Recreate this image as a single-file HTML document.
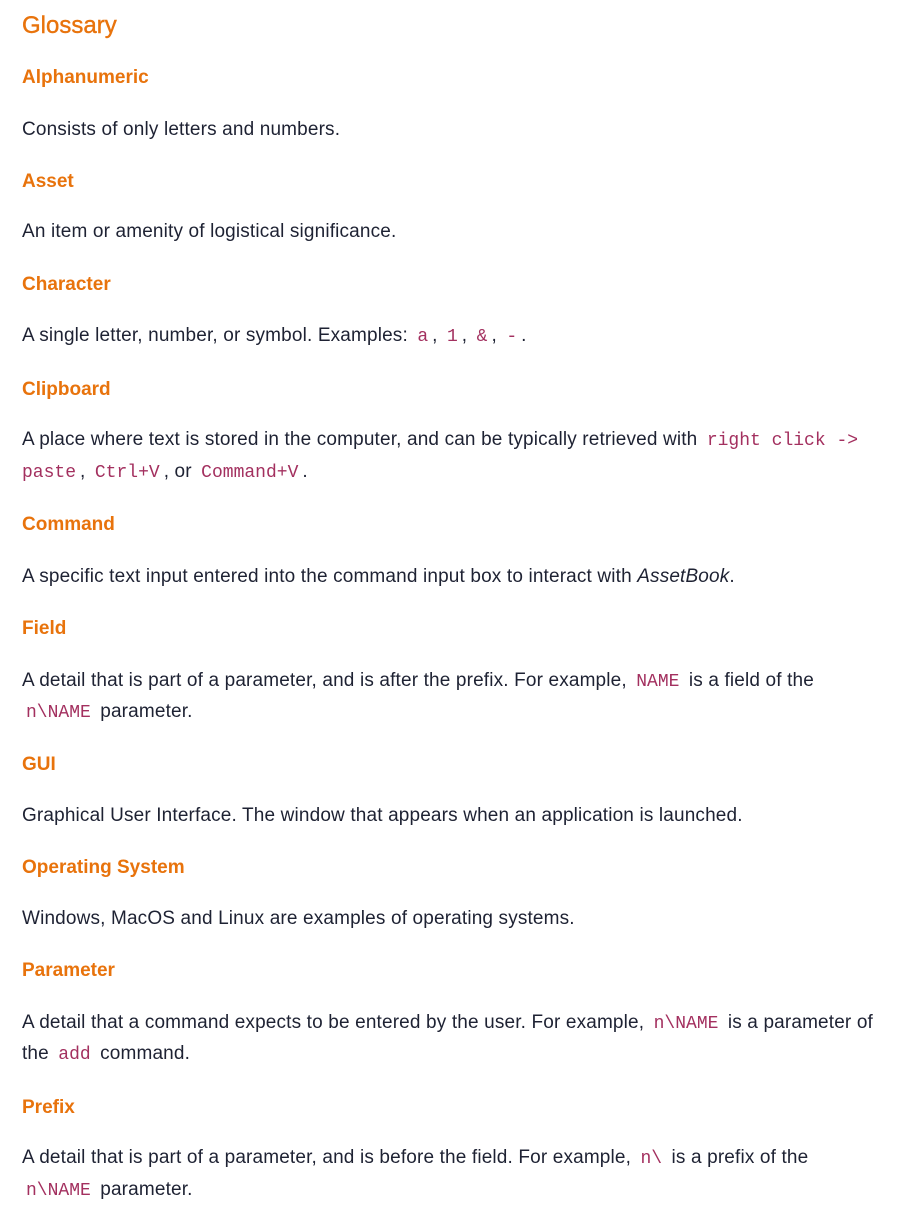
<!DOCTYPE html>
<html><head><meta charset="utf-8"><style>
body{margin:0;width:912px;height:1198px;background:#fff;font-family:"Liberation Sans",sans-serif;position:relative;overflow:hidden}
div{position:absolute;left:22px;white-space:nowrap;line-height:30px;margin-top:2px}
.h1{font-size:24px;color:#e8730c;line-height:34px;-webkit-text-stroke:0.4px #e8730c;margin-top:0}
.h{font-size:19px;font-weight:bold;color:#e8730c}
.p{font-size:19px;color:#1e2233;letter-spacing:0.15px}
code{font-family:"Liberation Mono",monospace;font-size:18px;letter-spacing:0;color:#a3305f;padding:0 4px}
</style></head><body>
<div class="h1" style="top:9px">Glossary</div>
<div class="h" style="top:61px">Alphanumeric</div>
<div class="p" style="top:113px">Consists of only letters and numbers.</div>
<div class="h" style="top:165px">Asset</div>
<div class="p" style="top:215px">An item or amenity of logistical significance.</div>
<div class="h" style="top:268px">Character</div>
<div class="p" style="top:319px">A single letter, number, or symbol. Examples: <code>a</code>, <code>1</code>, <code>&amp;</code>, <code>-</code>.</div>
<div class="h" style="top:373px">Clipboard</div>
<div class="p" style="top:423px">A place where text is stored in the computer, and can be typically retrieved with <code>right click -&gt;</code></div>
<div class="p" style="top:455px"><code style="padding-left:0">paste</code>, <code>Ctrl+V</code>, or <code>Command+V</code>.</div>
<div class="h" style="top:508px">Command</div>
<div class="p" style="top:560px">A specific text input entered into the command input box to interact with <i>AssetBook</i>.</div>
<div class="h" style="top:612px">Field</div>
<div class="p" style="top:664px">A detail that is part of a parameter, and is after the prefix. For example, <code>NAME</code> is a field of the</div>
<div class="p" style="top:695px"><code>n\NAME</code> parameter.</div>
<div class="h" style="top:748px">GUI</div>
<div class="p" style="top:799px">Graphical User Interface. The window that appears when an application is launched.</div>
<div class="h" style="top:851px">Operating System</div>
<div class="p" style="top:902px">Windows, MacOS and Linux are examples of operating systems.</div>
<div class="h" style="top:954px">Parameter</div>
<div class="p" style="top:1006px">A detail that a command expects to be entered by the user. For example, <code>n\NAME</code> is a parameter of</div>
<div class="p" style="top:1037px">the <code>add</code> command.</div>
<div class="h" style="top:1091px">Prefix</div>
<div class="p" style="top:1141px">A detail that is part of a parameter, and is before the field. For example, <code>n\</code> is a prefix of the</div>
<div class="p" style="top:1173px"><code>n\NAME</code> parameter.</div>
</body></html>
